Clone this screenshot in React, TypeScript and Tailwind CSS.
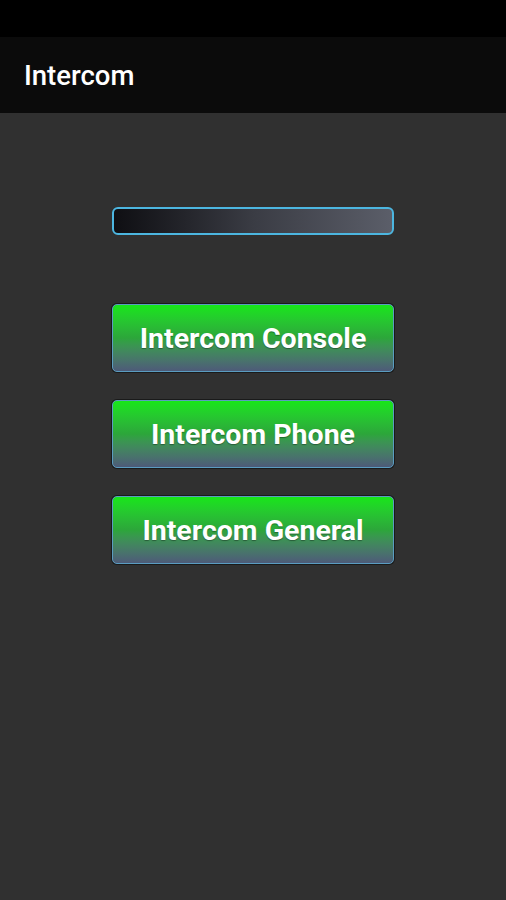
export default function App() {
  const buttons = ["Intercom Console", "Intercom Phone", "Intercom General"];
  return (
    <div
      className="flex h-[900px] w-[506px] flex-col bg-[#303030]"
      style={{ fontFamily: "Roboto, 'Noto Sans', sans-serif" }}
    >
      {/* status bar */}
      <div className="h-[37px] bg-black" />
      {/* app bar */}
      <div className="flex h-[76px] items-center bg-[#0b0b0b] pl-[24px]">
        <span className="mt-[2px] text-[27.5px] font-medium leading-none text-white">Intercom</span>
      </div>

      <div className="flex flex-col items-center pt-[94px]">
        <div className="h-[28px] w-[282px] rounded-[6px] border-2 border-[#4cb6e0] bg-gradient-to-r from-[#0f0f13] via-[#3a3c44] to-[#5b5e69]" />

        <div className="mt-[69px] flex flex-col gap-[28px]">
          {buttons.map((label) => (
            <div
              key={label}
              className="flex h-[68px] w-[282px] items-center justify-center rounded-[5px] border border-[#5a9cc0] bg-gradient-to-b from-[#17e617] via-[#2ca63a] to-[#4d5a78] shadow-[0_0_0_1px_#1a1a1a]"
            >
              <span className="mt-[3px] text-[28.5px] font-bold text-white [text-shadow:0_1px_1px_rgba(0,0,0,0.35)]">
                {label}
              </span>
            </div>
          ))}
        </div>
      </div>
    </div>
  );
}
